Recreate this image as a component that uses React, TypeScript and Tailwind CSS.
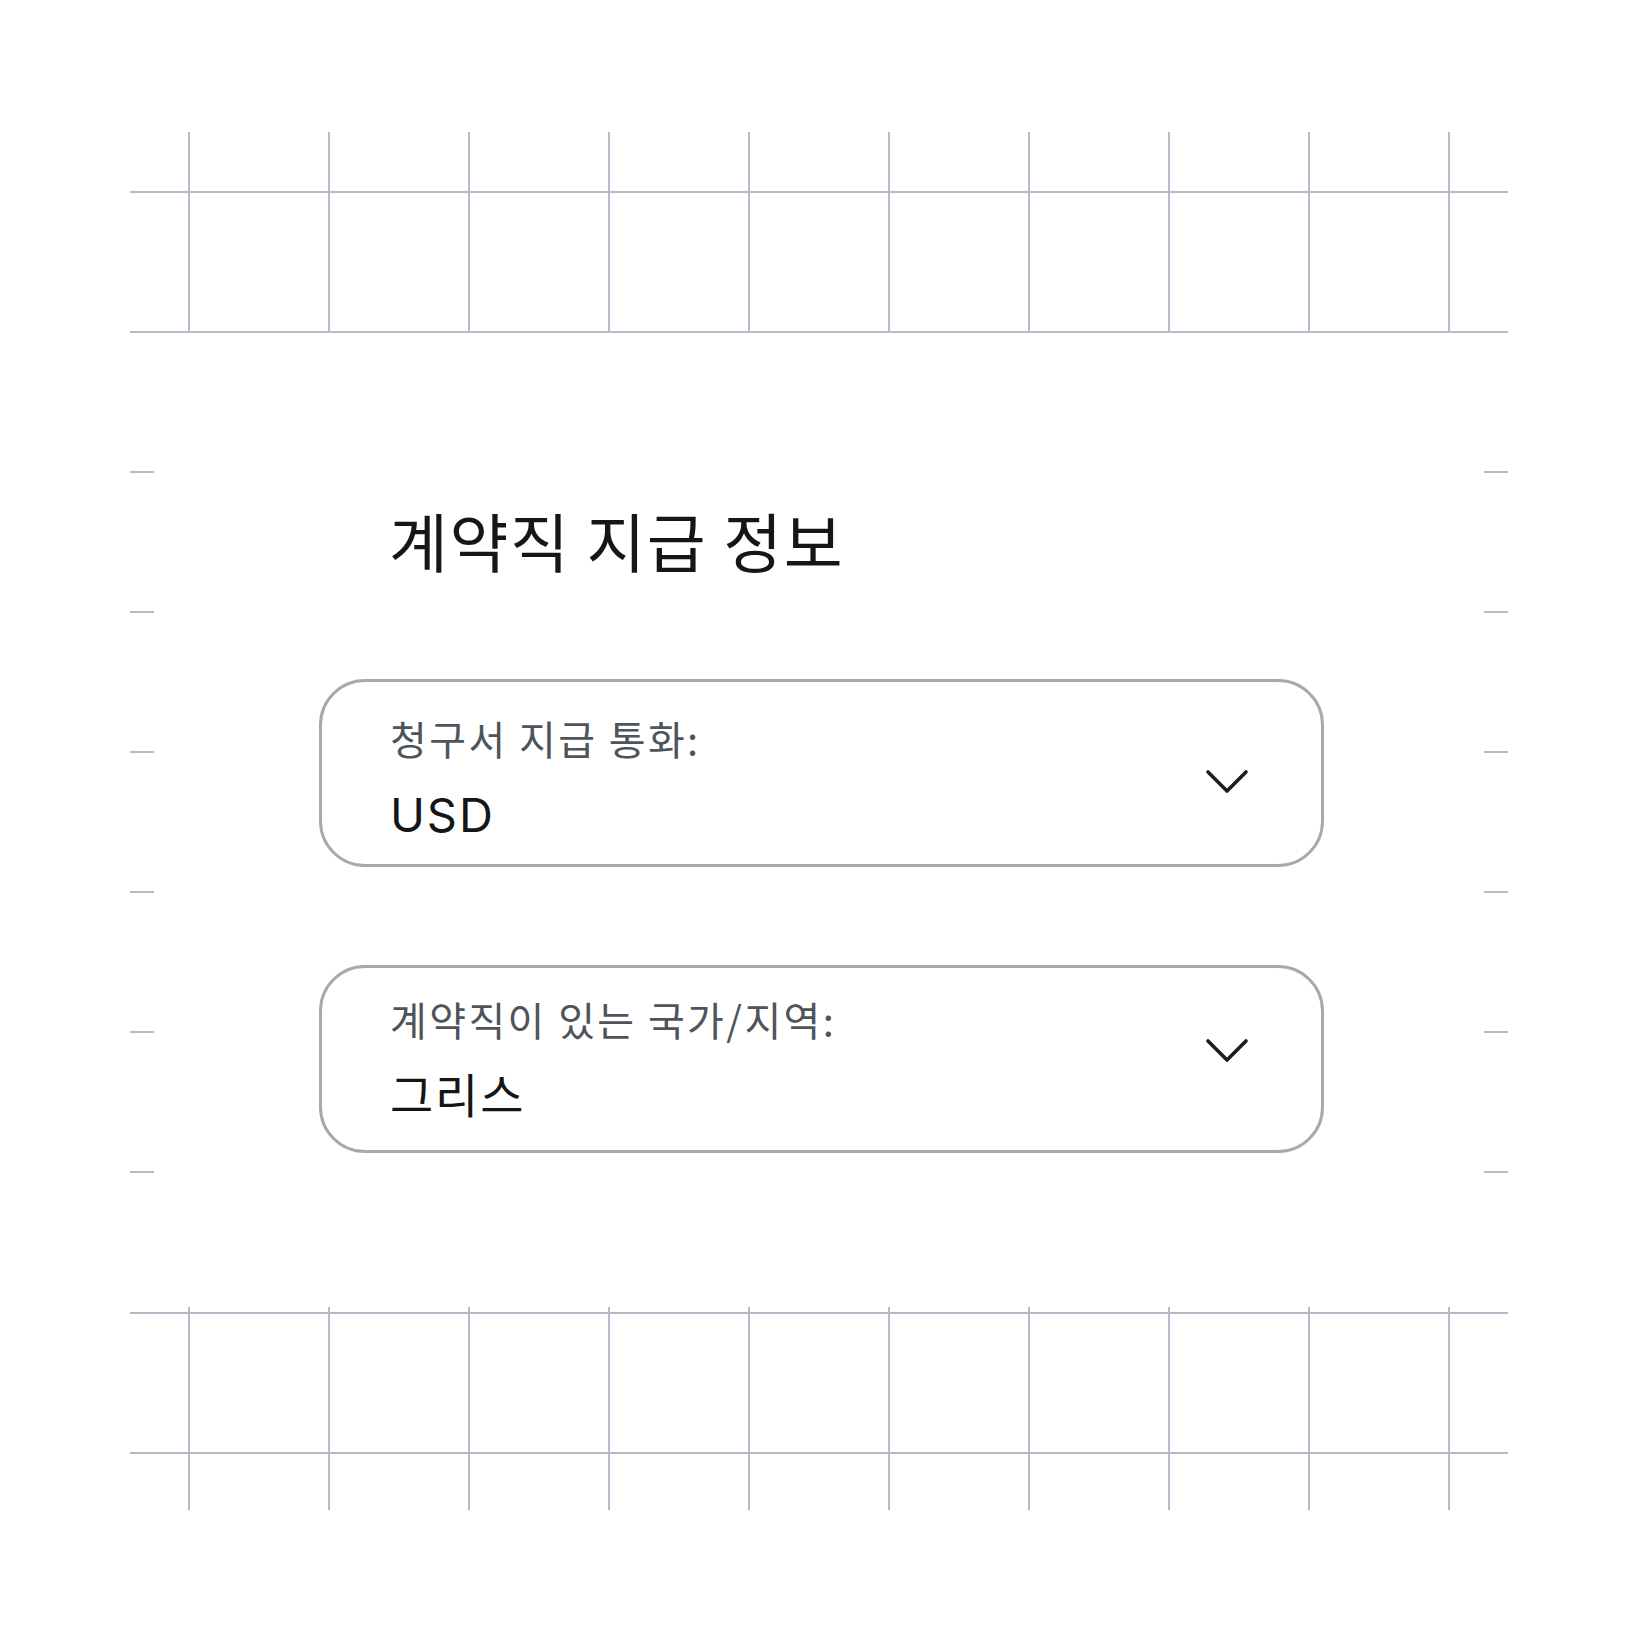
import React from 'react';

const LINE = 'bg-[#b4bccb]';
const COLS = [0, 1, 2, 3, 4, 5, 6, 7, 8, 9];
const TICKS = [0, 1, 2, 3, 4, 5];

// a row of vertical grid strokes, 140px apart
const VRow: React.FC<{ h: string }> = ({ h }) => (
  <div className={`flex pl-[58px] gap-[138px] ${h}`}>
    {COLS.map(i => (
      <div key={i} className={`w-[2px] h-full ${LINE}`} />
    ))}
  </div>
);

const HLine: React.FC = () => <div className={`h-[2px] w-full ${LINE}`} />;

const TickColumn: React.FC = () => (
  <div className="flex flex-col w-[24px] pt-[138px] gap-[138px]">
    {TICKS.map(i => (
      <div key={i} className={`h-[2px] w-full ${LINE}`} />
    ))}
  </div>
);

const Chevron: React.FC = () => (
  <svg width="44" height="26" viewBox="0 0 44 26" fill="none" className="text-[#1c1d1f]">
    <polyline points="3,3 22,22 41,3" stroke="currentColor" strokeWidth="3.6" strokeLinecap="round" strokeLinejoin="round" />
  </svg>
);

const SelectField: React.FC<{
  label: string;
  value: string;
  labelTop: string;
  chevronTop: string;
}> = ({ label, value, labelTop, chevronTop }) => (
  <div className="flex w-[1005px] h-[188px] rounded-[46px] border-[3px] border-[#a5aab0] bg-white">
    <div className={`flex flex-col flex-1 pl-[68px] ${labelTop}`}>
      <span className="text-[40px] leading-none tracking-[0.06em] text-[#4f545b] [font-family:'Noto_Sans_CJK_KR',sans-serif]">
        {label}
      </span>
      <span className="mt-[33px] text-[47px] leading-none tracking-[0.04em] text-[#141517] [font-family:Inter,'Noto_Sans_CJK_KR',sans-serif]">
        {value}
      </span>
    </div>
    <div className={`pr-[72px] ${chevronTop}`}>
      <Chevron />
    </div>
  </div>
);

export default function App() {
  return (
    <div className="w-[1640px] h-[1640px] bg-white pt-[132px] [font-family:'Noto_Sans_CJK_KR',sans-serif]">
      {/* top grid band */}
      <div className="ml-[130px] w-[1378px]">
        <VRow h="h-[59px]" />
        <HLine />
        <VRow h="h-[138px]" />
        <HLine />
      </div>

      {/* middle: side ticks + form */}
      <div className="ml-[130px] w-[1378px] h-[974px] flex">
        <TickColumn />
        <div className="flex-1 flex flex-col pl-[165px]">
          <h1 className="mt-[174px] pl-[70px] text-[64px] leading-none tracking-[0.025em] text-[#141618] font-normal">
            계약직 지급 정보
          </h1>
          <div className="mt-[108px] flex flex-col gap-[98px]">
            <SelectField
              label="청구서 지급 통화:"
              value="USD"
              labelTop="pt-[36px]"
              chevronTop="pt-[87px]"
            />
            <SelectField
              label="계약직이 있는 국가/지역:"
              value="그리스"
              labelTop="pt-[31px]"
              chevronTop="pt-[70px]"
            />
          </div>
        </div>
        <TickColumn />
      </div>

      {/* bottom grid band */}
      <div className="ml-[130px] w-[1378px]">
        <VRow h="h-[5px]" />
        <HLine />
        <VRow h="h-[138px]" />
        <HLine />
        <VRow h="h-[56px]" />
      </div>
    </div>
  );
}
